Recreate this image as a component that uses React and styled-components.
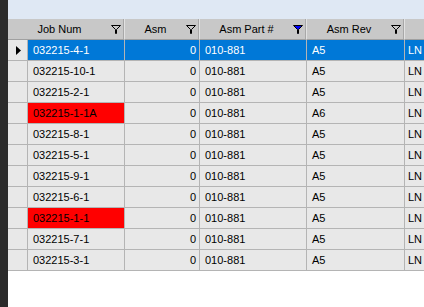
import React from "react";
import styled, { createGlobalStyle } from "styled-components";

const Global = createGlobalStyle`
  html, body { margin: 0; padding: 0; background: #ffffff; }
  body { font-family: "Liberation Sans", Arial, sans-serif; }
`;

const Page = styled.div`
  display: flex;
  width: 424px;
  height: 307px;
  overflow: hidden;
  background: #ffffff;
`;

const SideStrip = styled.div`
  width: 8px;
  flex: none;
  background: #2b2b2b;
`;

const Main = styled.div`
  flex: 1;
  display: flex;
  flex-direction: column;
  min-width: 0;
`;

const TopBand = styled.div`
  height: 19px;
  flex: none;
  background: #dfe8f4;
`;

const Grid = styled.div`
  display: grid;
  grid-template-columns: 20px 97px 75px 107px 98px 40px;
  grid-auto-rows: 21px;
  overflow: hidden;
  font-size: 11px;
  color: #000;
`;

const HeaderCell = styled.div`
  grid-column: ${(p) => p.$span || "auto"};
  box-sizing: border-box;
  background: #c8c8c8;
  border-right: 1px solid #e2e2e2;
  box-shadow: inset -1px 0 0 #a8a8a8;
  border-bottom: 1px solid #a0a0a0;
  display: flex;
  align-items: center;
  padding-right: 3px;
  white-space: nowrap;
  overflow: hidden;
`;

const HeaderText = styled.span`
  flex: 1;
  text-align: center;
  color: #000;
`;

const Cell = styled.div`
  box-sizing: border-box;
  border-right: 1px solid #b4b4b4;
  border-bottom: 1px solid #b4b4b4;
  background: ${(p) => (p.$red ? "#ff0000" : p.$sel ? "#0078d7" : "#e8e8e8")};
  color: ${(p) => (p.$sel && !p.$red ? "#ffffff" : "#000000")};
  display: flex;
  align-items: center;
  justify-content: ${(p) => (p.$right ? "flex-end" : "flex-start")};
  padding: ${(p) => (p.$right ? "0 3px 0 0" : `0 0 0 ${p.$pl ?? 4}px`)};
  white-space: nowrap;
  overflow: hidden;
`;

const Selector = styled.div`
  box-sizing: border-box;
  border-right: 1px solid #b4b4b4;
  border-bottom: 1px solid #b4b4b4;
  background: #e8e8e8;
  display: flex;
  align-items: center;
  padding-left: 8px;
`;

const Funnel = ({ filled }) => (
  <svg width="10" height="9" viewBox="0 0 10 9" style={{ flex: "none" }}>
    <path
      d="M0.5 0.5 H9.5 L5.5 4.5 V8.5 H4.5 V4.5 Z"
      fill={filled ? "#0000ff" : "none"}
      stroke="#000"
      strokeWidth="1"
      strokeLinejoin="miter"
    />
  </svg>
);

const Pointer = () => (
  <svg width="5" height="9" viewBox="0 0 5 9">
    <path d="M0 0 L5 4.5 L0 9 Z" fill="#000" />
  </svg>
);

const rows = [
  { job: "032215-4-1", rev: "A5", sel: true },
  { job: "032215-10-1", rev: "A5" },
  { job: "032215-2-1", rev: "A5" },
  { job: "032215-1-1A", rev: "A6", red: true },
  { job: "032215-8-1", rev: "A5" },
  { job: "032215-5-1", rev: "A5" },
  { job: "032215-9-1", rev: "A5" },
  { job: "032215-6-1", rev: "A5" },
  { job: "032215-1-1", rev: "A5", red: true },
  { job: "032215-7-1", rev: "A5" },
  { job: "032215-3-1", rev: "A5" },
];

export default function App() {
  return (
    <>
      <Global />
      <Page>
        <SideStrip />
        <Main>
          <TopBand />
          <Grid>
            <HeaderCell $span="span 2">
              <HeaderText>Job Num</HeaderText>
              <Funnel />
            </HeaderCell>
            <HeaderCell>
              <HeaderText>Asm</HeaderText>
              <Funnel />
            </HeaderCell>
            <HeaderCell>
              <HeaderText>Asm Part #</HeaderText>
              <Funnel filled />
            </HeaderCell>
            <HeaderCell>
              <HeaderText>Asm Rev</HeaderText>
              <Funnel />
            </HeaderCell>
            <HeaderCell>
              <HeaderText></HeaderText>
            </HeaderCell>
            {rows.map((r, i) => (
              <React.Fragment key={i}>
                <Selector>{r.sel && <Pointer />}</Selector>
                <Cell $sel={r.sel} $red={r.red} $pl={5}>
                  {r.job}
                </Cell>
                <Cell $sel={r.sel} $right>
                  0
                </Cell>
                <Cell $sel={r.sel} $pl={5}>
                  010-881
                </Cell>
                <Cell $sel={r.sel} $pl={5}>
                  {r.rev}
                </Cell>
                <Cell $sel={r.sel} $pl={3}>
                  LN
                </Cell>
              </React.Fragment>
            ))}
          </Grid>
        </Main>
      </Page>
    </>
  );
}
